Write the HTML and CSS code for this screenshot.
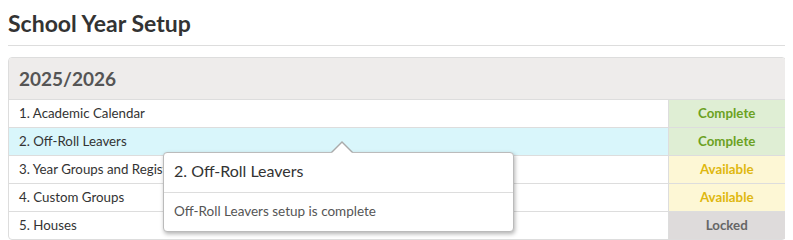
FILE: index.html
```html
<!DOCTYPE html>
<html>
<head>
	<title>School Year Setup</title>
	<meta charset="utf-8">
	<link rel="stylesheet" href="styles.css">
</head>
<body>
	<h2 class="page-title">School Year Setup</h2>
	<section class="panel">
		<div class="panel-head">2025/2026</div>
		<table class="steps">
			<tr>
				<td class="step-name">1. Academic Calendar</td>
				<td class="state complete">Complete</td>
			</tr>
			<tr class="active">
				<td class="step-name">
					2. Off-Roll Leavers
					<div class="popover">
						<div class="popover-title">2. Off-Roll Leavers</div>
						<div class="popover-body">Off-Roll Leavers setup is complete</div>
					</div>
				</td>
				<td class="state complete">Complete</td>
			</tr>
			<tr>
				<td class="step-name">3. Year Groups and Registration Groups</td>
				<td class="state available">Available</td>
			</tr>
			<tr>
				<td class="step-name">4. Custom Groups</td>
				<td class="state available">Available</td>
			</tr>
			<tr>
				<td class="step-name">5. Houses</td>
				<td class="state locked">Locked</td>
			</tr>
		</table>
	</section>
</body>
</html>
```
FILE: styles.css
```css
*{
	margin: 0;
	padding: 0;
	box-sizing: border-box;
}
body{
	margin: 8px;
	font-family: Lato, "Noto Sans", sans-serif;
	color: #333;
	background: #fff;
}
.page-title{
	font-size: 23px;
	font-weight: bold;
	color: #333;
	height: 38px;
	padding-top: 1px;
	border-bottom: 1px solid #ddd;
	margin-bottom: 11px;
}
.panel{
	border: 1px solid #ddd;
	border-radius: 4px;
	width: 778px;
}
.panel-head{
	background: #eeeceb;
	height: 42px;
	padding: 9px 10px;
	font-size: 19px;
	font-weight: bold;
	color: #555;
	border-bottom: 1px solid #ddd;
	border-radius: 3px 3px 0 0;
}
.steps{
	width: 100%;
	border-collapse: collapse;
	font-size: 13.3px;
	color: #333;
}
.steps td{
	height: 28px;
	border-top: 1px solid #ddd;
	padding: 0 10px;
	vertical-align: middle;
}
.steps tr:first-child td{
	border-top: none;
	height: 27px;
}
.steps .step-name{
	position: relative;
	white-space: nowrap;
	overflow: visible;
}
.steps .state{
	width: 117px;
	border-left: 1px solid #ddd;
	text-align: center;
	font-weight: bold;
}
.steps .complete{
	background: #dfeed4;
	color: #6ba123;
}
.steps .available{
	background: #fdf7d5;
	color: #dfb80f;
}
.steps .locked{
	background: #dedbdb;
	color: #666;
}
.steps tr.active .step-name{
	background: #d9f6fb;
}
.popover{
	position: absolute;
	left: 154px;
	top: 24px;
	width: 351px;
	background: #fff;
	border: 1px solid #bbb;
	border-radius: 4px;
	box-shadow: 1px 2px 4px rgba(0,0,0,0.3);
	z-index: 5;
	white-space: nowrap;
}
.popover::before,
.popover::after{
	content: "";
	position: absolute;
	left: 167px;
	border: 11px solid transparent;
	border-top: none;
}
.popover::before{
	top: -12px;
	border-bottom-color: #aaa;
}
.popover::after{
	top: -10px;
	border-bottom-color: #fff;
}
.popover-title{
	font-size: 16px;
	color: #333;
	padding: 8px 10px;
	height: 40px;
	border-bottom: 1px solid #ddd;
}
.popover-body{
	font-size: 13.5px;
	color: #555;
	padding: 10px 10px 0;
	height: 38px;
}
```
